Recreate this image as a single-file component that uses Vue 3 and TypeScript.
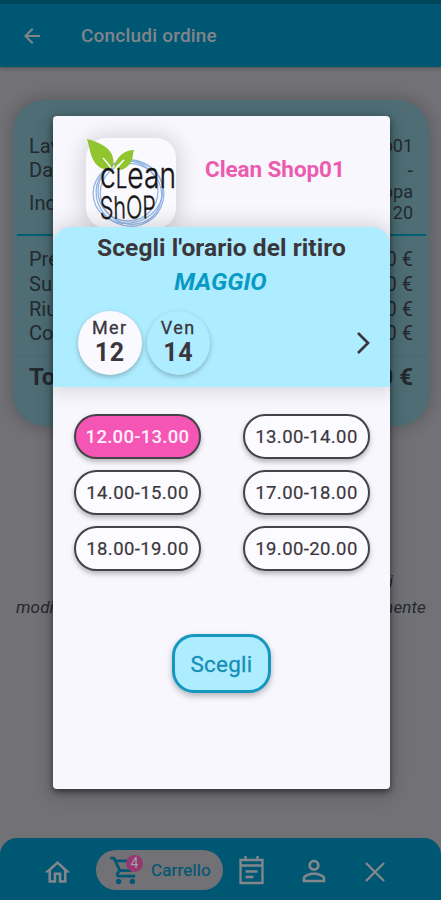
<script setup lang="ts">
import { ref } from 'vue'

interface Day { name: string; num: number }
const days: Day[] = [
  { name: 'Mer', num: 12 },
  { name: 'Ven', num: 14 },
]
const slots: string[] = ['12.00-13.00', '13.00-14.00', '14.00-15.00', '17.00-18.00', '18.00-19.00', '19.00-20.00']
const costs: string[] = ['Prezzo', 'Supplementi', 'Riutilizzo', 'Consegna']
const day = ref<number>(12)
const slot = ref<string>('12.00-13.00')
</script>

<template>
  <div class="screen">
    <header class="topbar">
      <svg class="back" viewBox="0 0 24 24"><path d="M20 11H7.83l5.59-5.59L12 4l-8 8 8 8 1.41-1.41L7.83 13H20v-2z" /></svg>
      <h1>Concludi ordine</h1>
    </header>

    <main class="content">
      <section class="summary">
        <div class="row info"><span>Lavanderia</span><span class="small">Clean Shop01</span></div>
        <div class="row info"><span>Data ritiro</span><span>-</span></div>
        <div class="row address"><span>Indirizzo</span><span class="small">Via Europa<br />20</span></div>
        <hr />
        <div v-for="c in costs" :key="c" class="row cost"><span>{{ c }}</span><span>0,00 €</span></div>
        <div class="row total"><span>Totale</span><span>0,00 €</span></div>
      </section>
      <div class="note">
        <div class="note-line first"><span>i</span></div>
        <div class="note-line"><span>modificare</span><span>esclusivamente</span></div>
      </div>
    </main>

    <nav class="bottombar">
      <svg class="home" viewBox="0 0 24 24"><path d="M12 5.69l5 4.5V18h-2v-6H9v6H7v-7.81l5-4.5M12 3L2 12h3v8h6v-6h2v6h6v-8h3L12 3z" /></svg>
      <div class="cart">
        <div class="cart-icon">
          <svg viewBox="0 0 24 24"><path d="M15.55 13c.75 0 1.41-.41 1.75-1.03l3.58-6.49C21.25 4.82 20.77 4 20.01 4H5.21l-.94-2H1v2h2l3.6 7.59-1.35 2.44C4.52 15.37 5.48 17 7 17h12v-2H7l1.1-2h7.45zM6.16 6h12.15l-2.76 5H8.53L6.16 6zM7 18c-1.1 0-1.99.9-1.99 2S5.9 22 7 22s2-.9 2-2-.9-2-2-2zm10 0c-1.1 0-1.99.9-1.99 2s.89 2 1.99 2 2-.9 2-2-.9-2-2-2z" /></svg>
          <span class="badge">4</span>
        </div>
        <span>Carrello</span>
      </div>
      <svg class="calendar" viewBox="0 0 26 30"><path d="M2 5h22v23H2zM2 10.5h22M7 1v4M19 1v4M7 16.5h12M7 22h8" /></svg>
      <svg class="person" viewBox="0 0 24 24"><path d="M12 5.9a2.1 2.1 0 110 4.2 2.1 2.1 0 010-4.2m0 9c2.97 0 6.1 1.46 6.1 2.1v1.1H5.9V17c0-.64 3.13-2.1 6.1-2.1M12 4C9.79 4 8 5.79 8 8s1.79 4 4 4 4-1.79 4-4-1.79-4-4-4zm0 9c-2.67 0-8 1.34-8 4v3h16v-3c0-2.66-5.33-4-8-4z" /></svg>
      <svg class="close" viewBox="0 0 20 20"><path d="M1 1l18 18M19 1L1 19" /></svg>
    </nav>

    <div class="overlay">
      <div class="dialog">
        <div class="shop">
          <div class="logo">
            <svg viewBox="0 0 90 90">
              <g class="rings">
                <ellipse cx="42" cy="54" rx="35" ry="31" transform="rotate(-12 42 54)" />
                <ellipse cx="44" cy="55" rx="34" ry="33" transform="rotate(25 44 55)" />
                <ellipse cx="42" cy="53" rx="30" ry="30" />
                <ellipse cx="45" cy="56" rx="31" ry="30" transform="rotate(35 45 56)" />
              </g>
              <path class="leaf" d="M1 1C14 4 26 11 27 20C28 25 27 28 26 31C22 32 17 32 12 28C4 21 4 10 1 1Z" />
              <path class="leaf" d="M48 12C39 12 29 19 28 31C36 34 43 29 46 22C47 18 47 15 48 12Z" />
              <path class="vein" d="M17 20Q23 26 26 32L28 32Q32 27 38 22Q31 29 29 34" />
              <text x="14" y="50" textLength="76" lengthAdjust="spacingAndGlyphs">c<tspan class="low">L</tspan>ean</text>
              <text class="second" x="14" y="81" textLength="56" lengthAdjust="spacingAndGlyphs" transform="rotate(-1 14 81)">ShOP</text>
            </svg>
          </div>
          <div class="shop-name">Clean Shop01</div>
        </div>

        <div class="picker">
          <h2>Scegli l'orario del ritiro</h2>
          <div class="month">MAGGIO</div>
          <div class="days">
            <div v-for="d in days" :key="d.num" class="day" :class="{ active: d.num === day }" @click="day = d.num">
              <span class="dname">{{ d.name }}</span>
              <span class="dnum">{{ d.num }}</span>
            </div>
            <svg class="next" viewBox="0 0 14 24"><path d="M2 2l10 10L2 22" /></svg>
          </div>
        </div>

        <div class="slots">
          <button v-for="s in slots" :key="s" class="slot" :class="{ active: s === slot }" @click="slot = s">{{ s }}</button>
        </div>
        <button class="confirm">Scegli</button>
      </div>
    </div>
  </div>
</template>

<style>
body { margin: 0; }
</style>

<style scoped>
* { box-sizing: border-box; }
.screen {
  position: relative;
  display: flex;
  flex-direction: column;
  width: 441px;
  height: 900px;
  overflow: hidden;
  background: #727176;
  font-family: Roboto, "Liberation Sans", sans-serif;
  color: #24292e;
}
button { font-family: inherit; padding: 0; }
.topbar {
  display: flex;
  align-items: center;
  height: 67px;
  padding: 1px 0 0 20px;
  border-top: 4px solid #00465a;
  background: #005773;
  box-shadow: 0 1px 4px rgba(0, 0, 0, .3);
}
.back { width: 24px; height: 24px; fill: #80858a; }
.topbar h1 { margin: 0 0 0 37px; font-size: 19px; font-weight: 500; line-height: 24px; color: #80858a; letter-spacing: .2px; }
.content { flex: 1; padding: 33px 12px 0 13px; }
.summary {
  height: 326px;
  padding: 34px 3px 0 4px;
  border-radius: 32px;
  background: #4e6d75;
  box-shadow: 0 0 14px 4px rgba(0, 0, 0, .16);
}
.row { display: flex; justify-content: space-between; padding: 0 13px 0 12px; font-size: 20px; line-height: 24.8px; }
.small { font-size: 18px; }
.info { line-height: 24px; }
.address { align-items: center; line-height: 21px; height: 42px; }
.address > span:last-child { position: relative; top: -1px; text-align: right; }
.summary hr { height: 2px; margin: 10px 0 11px; border: 0; background: #005f73; }
.total { margin-top: 9px; padding-top: 6px; border-top: 1px solid #4a6870; font-size: 24px; font-weight: 700; line-height: 30px; }
.note { padding: 142px 3px 0 3px; font-size: 17px; font-style: italic; }
.note-line { display: flex; justify-content: space-between; line-height: 26px; }
.note-line:last-child { letter-spacing: .15px; }
.note-line.first { justify-content: flex-end; padding-right: 33px; }
.bottombar {
  display: flex;
  align-items: center;
  height: 62px;
  padding: 2px 54px 0 44px;
  border-radius: 17px 17px 0 0;
  background: #005773;
}
.bottombar svg { flex: none; fill: #83878c; }
.home { width: 31px; height: 31px; margin: 5px 23px 0 -2px; }
.cart { display: flex; align-items: center; gap: 8px; width: 127px; height: 40px; margin-right: 15px; padding-left: 13px; border-radius: 20px; background: #727176; color: #005773; font-size: 17px; -webkit-text-stroke: .2px #005773; letter-spacing: .15px; }
.cart-icon { position: relative; width: 34px; height: 33px; }
.cart-icon svg { width: 33px; height: 33px; fill: #005773; }
.badge { position: absolute; top: 1px; right: 0; width: 17px; height: 17px; border-radius: 50%; background: #963771; color: #a5a0a5; font-size: 14px; line-height: 17px; text-align: center; letter-spacing: 0; -webkit-text-stroke: 0; }
.bottombar .calendar, .bottombar .close { fill: none; stroke: #83878c; stroke-width: 2.3; }
.calendar { width: 27px; height: 30px; margin-right: 34px; }
.person { width: 34px; height: 34px; margin: 2px 34px 0 0; }
.bottombar .person { margin-left: -2px; }
.close { width: 20px; height: 20px; margin-top: 4px; }

.overlay { position: absolute; inset: 0; padding: 116px 51px 0 53px; }
.dialog {
  display: flex;
  flex-direction: column;
  height: 673px;
  border-radius: 4px;
  background: #f8f7fe;
  box-shadow: 0 3px 6px rgba(0, 0, 0, .5), 0 4px 18px 3px rgba(0, 0, 0, .16);
  overflow: hidden;
  color: #3b363c;
}
.shop { display: flex; height: 111px; padding: 22px 0 0 33px; }
.logo { width: 90px; height: 90px; border-radius: 20px; background: #fafafe; box-shadow: 0 1px 20px 4px rgba(0, 0, 0, .14); }
.logo svg { display: block; width: 90px; height: 90px; overflow: visible; }
.logo text { font-family: Inter, "Open Sans", sans-serif; font-size: 37px; font-weight: 300; fill: #161616; stroke: #161616; stroke-width: .4; }
.logo .low { font-size: 27px; }
.logo .second { font-size: 31px; }
.rings { fill: none; stroke: #93b5e5; stroke-width: 1.3; }
.leaf { fill: #91c52f; }
.vein { fill: none; stroke: #f8f9f6; stroke-width: 1.5; }
.shop-name { margin: 17px 0 0 29px; font-size: 22.5px; font-weight: 700; line-height: 28px; color: #ec5baf; letter-spacing: -.08px; }
.picker {
  position: relative;
  height: 160px;
  border-radius: 18px 18px 0 0;
  background: #aeedff;
  box-shadow: 0 0 20px 4px rgba(0, 0, 0, .14);
}
.picker h2 { margin: 0; padding-top: 4px; font-size: 24.5px; font-weight: 700; line-height: 33px; text-align: center; letter-spacing: .08px; }
.month { font-size: 24.5px; font-weight: 700; font-style: italic; line-height: 36px; text-align: center; color: #0999c5; margin-left: -2px; }
.days { display: flex; align-items: center; gap: 5px; padding: 11px 20px 0 25px; }
.day {
  display: flex;
  flex-direction: column;
  align-items: center;
  width: 63.5px;
  height: 63.5px;
  padding-top: 6px;
  border-radius: 50%;
  background: #aeedff;
  box-shadow: 0 2px 5px rgba(0, 0, 0, .26);
}
.day.active { background: #faf9ff; }
.dname { font-size: 18px; -webkit-text-stroke: .3px #3b363c; line-height: 22px; letter-spacing: 1.4px; }
.dnum { font-size: 25px; font-weight: 700; line-height: 28px; letter-spacing: .7px; }
.next { width: 14px; height: 24px; margin-left: auto; fill: none; stroke: #3b363c; stroke-width: 2.7; }
.slots { display: grid; grid-template-columns: 127px 127px; justify-content: space-between; row-gap: 11px; padding: 27px 20px 0 21px; }
.slot {
  height: 45px;
  border: 2px solid #464249;
  border-radius: 23px;
  background: #fcfbff;
  box-shadow: 0 3px 5px rgba(0, 0, 0, .27);
  color: #3b373d;
  font-size: 18.5px;
  -webkit-text-stroke: .2px #3b373d;
  letter-spacing: .4px;
}
.slot.active { background: #f556b6; color: #fff0fb; font-weight: 500; -webkit-text-stroke: 0; letter-spacing: .28px; }
.confirm {
  align-self: center;
  width: 99px;
  height: 59px;
  margin: 63px 0 0 0;
  border: 3px solid #1597bf;
  border-radius: 22px;
  background: #aeedff;
  box-shadow: 0 3px 6px rgba(0, 0, 0, .28);
  color: #168fb7;
  font-size: 22.5px;
  -webkit-text-stroke: .3px #168fb7;
  letter-spacing: .25px;
}
</style>
